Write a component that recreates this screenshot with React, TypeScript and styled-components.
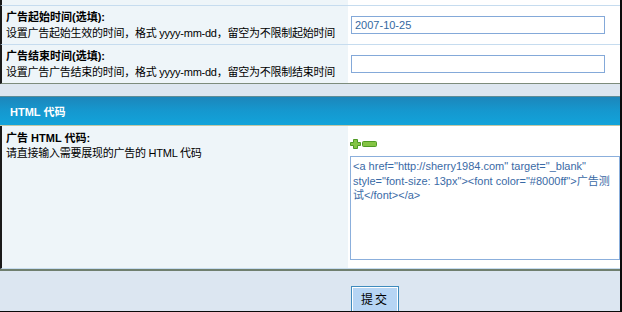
import React from "react";
import styled, { createGlobalStyle } from "styled-components";

const GlobalStyle = createGlobalStyle`
  html, body {
    margin: 0;
    padding: 0;
    background: #ffffff;
  }
  body {
    font-family: "Liberation Sans", "Noto Sans CJK SC", sans-serif;
    font-size: 11px;
    color: #000;
  }
`;

const Frame = styled.div`
  width: 620px;
  height: 311px;
  border-right: 2px solid #0a0a0a;
  border-bottom: 1px solid #0a0a0a;
  display: flex;
  flex-direction: column;
  overflow: hidden;
`;

const Row = styled.div<{ $h: number; $heavy?: boolean }>`
  display: grid;
  grid-template-columns: 346px 1fr;
  height: ${(p) => p.$h}px;
  flex-shrink: 0;
  border-left: 2px solid #1a1a1a;
  border-bottom: ${(p) => (p.$heavy ? "1px solid #7d8c7c" : "1px solid #c6dcef")};
`;

const LabelCell = styled.div<{ $top?: boolean }>`
  background: #eef5f9;
  padding: ${(p) => (p.$top ? "5px 4px 0" : "0 4px")};
  display: flex;
  flex-direction: column;
  justify-content: ${(p) => (p.$top ? "flex-start" : "center")};
  line-height: ${(p) => (p.$top ? "15px" : "16px")};
`;

const FieldCell = styled.div<{ $stack?: boolean }>`
  background: #ffffff;
  display: flex;
  flex-direction: ${(p) => (p.$stack ? "column" : "row")};
  align-items: ${(p) => (p.$stack ? "flex-start" : "center")};
  padding: ${(p) => (p.$stack ? "13px 0 0 2px" : "0 0 0 3px")};
`;

const Label = styled.b`
  font-weight: bold;
  font-size: 11px;
`;

const Hint = styled.span`
  font-size: 11px;
  letter-spacing: -0.25px;
`;

const TextInput = styled.input`
  box-sizing: border-box;
  width: 254px;
  height: 18px;
  margin: 0;
  padding: 0 3px;
  border: 1px solid #84a9d9;
  font-family: "Liberation Sans", "Noto Sans CJK SC", sans-serif;
  font-size: 11px;
  color: #34689f;
  outline: none;
`;

const Band = styled.div`
  height: 12px;
  flex-shrink: 0;
  background: #dde6f0;
`;

const SectionHeader = styled.div`
  height: 28px;
  flex-shrink: 0;
  border-top: 1px solid #5f8d97;
  border-bottom: 1px solid #c2c8a6;
  background: linear-gradient(to bottom, #1c86bb 0%, #1598cf 50%, #12a3da 100%);
  color: #ffffff;
  font-weight: bold;
  font-size: 11px;
  display: flex;
  align-items: center;
  padding-left: 10px;
`;

const Tools = styled.div`
  display: flex;
  align-items: center;
  gap: 1px;
  height: 10px;
  margin-bottom: 7px;
`;

const CodeArea = styled.textarea`
  box-sizing: border-box;
  width: 270px;
  height: 104px;
  margin: 0;
  padding: 2px;
  border: 1px solid #8bafdc;
  resize: none;
  font-family: "Liberation Sans", "Noto Sans CJK SC", sans-serif;
  font-size: 11px;
  line-height: 14.5px;
  color: #3a6aa6;
  outline: none;
  overflow: hidden;
`;

const Footer = styled.div`
  flex: 1;
  background: #dce6f1;
  border-top: 2px solid #6f7f6f;
  padding: 15px 0 0 351px;
  overflow: hidden;
`;

const SubmitButton = styled.button`
  width: 48px;
  height: 28px;
  margin: 0;
  padding: 0 0 4px;
  background: #b6d5f4;
  border: 1px solid #3f8bbd;
  box-shadow: inset 0 0 0 1px #ffffff;
  font-family: "Noto Sans CJK SC", sans-serif;
  font-size: 12px;
  letter-spacing: 2px;
  color: #000;
`;

const PlusIcon = () => (
  <svg width="11" height="10" viewBox="0 0 11 10">
    <path
      d="M3.5 0.5h4v3h3v3h-3v3h-4v-3h-3v-3h3z"
      fill="#84c444"
      stroke="#4f9a24"
      strokeWidth="1"
    />
  </svg>
);

const MinusIcon = () => (
  <svg width="15" height="6" viewBox="0 0 15 6">
    <rect x="0.5" y="0.5" width="14" height="5" rx="1" fill="#84c444" stroke="#4f9a24" strokeWidth="1" />
  </svg>
);

const code =
  '<a href="http://sherry1984.com" target="_blank" style="font-size: 13px"><font color="#8000ff">广告测试</font></a>';

export default function App() {
  return (
    <>
      <GlobalStyle />
      <Frame>
        <Row $h={5}>
          <LabelCell />
          <FieldCell />
        </Row>
        <Row $h={38}>
          <LabelCell>
            <Label>广告起始时间(选填):</Label>
            <Hint>设置广告起始生效的时间，格式 yyyy-mm-dd，留空为不限制起始时间</Hint>
          </LabelCell>
          <FieldCell>
            <TextInput defaultValue="2007-10-25" />
          </FieldCell>
        </Row>
        <Row $h={38} $heavy>
          <LabelCell>
            <Label>广告结束时间(选填):</Label>
            <Hint>设置广告广告结束的时间，格式 yyyy-mm-dd，留空为不限制结束时间</Hint>
          </LabelCell>
          <FieldCell>
            <TextInput defaultValue="" />
          </FieldCell>
        </Row>
        <Band />
        <SectionHeader>HTML 代码</SectionHeader>
        <Row $h={142}>
          <LabelCell $top>
            <Label>广告 HTML 代码:</Label>
            <Hint>请直接输入需要展现的广告的 HTML 代码</Hint>
          </LabelCell>
          <FieldCell $stack>
            <Tools>
              <PlusIcon />
              <MinusIcon />
            </Tools>
            <CodeArea defaultValue={code} />
          </FieldCell>
        </Row>
        <Footer>
          <SubmitButton>提交</SubmitButton>
        </Footer>
      </Frame>
    </>
  );
}
